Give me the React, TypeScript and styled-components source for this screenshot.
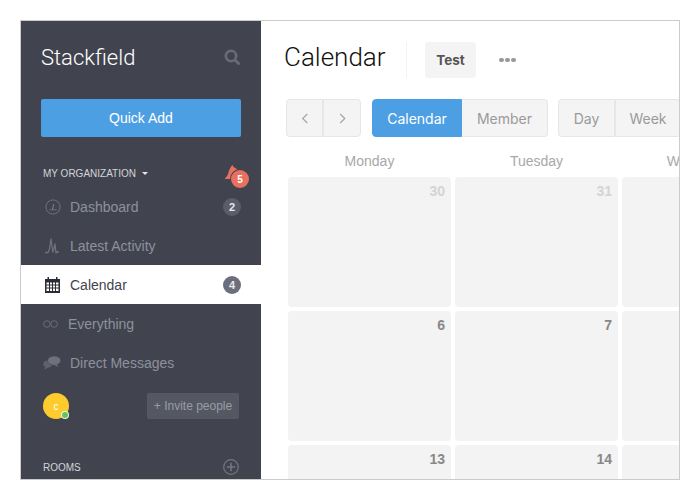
import React from "react";
import styled, { createGlobalStyle } from "styled-components";

const Global = createGlobalStyle`
  html, body { margin: 0; padding: 0; background: #fff; }
  body { font-family: "Liberation Sans", Arial, sans-serif; }
`;

const Frame = styled.div`
  box-sizing: border-box;
  width: 660px;
  height: 460px;
  margin: 20px;
  border: 1px solid #cbcbcb;
  display: flex;
  overflow: hidden;
  background: #fff;
`;

const Sidebar = styled.aside`
  width: 240px;
  flex: none;
  background: #41444f;
  display: flex;
  flex-direction: column;
`;

const Brand = styled.div`
  height: 78px;
  padding: 0 21px 0 20px;
  display: flex;
  align-items: center;
  justify-content: space-between;
  flex: none;
`;

const BrandName = styled.div`
  font-family: Roboto, sans-serif;
  font-weight: 300;
  font-size: 22px;
  color: #fff;
  padding-bottom: 6px;
`;

const SearchSlot = styled.span`
  display: flex;
  padding-bottom: 6px;
`;

const QuickAdd = styled.button`
  flex: none;
  margin-left: 20px;
  width: 200px;
  height: 38px;
  border: none;
  border-radius: 2px;
  background: #4d9fe3;
  color: #fff;
  font-family: "Liberation Sans", sans-serif;
  font-size: 14px;
  padding: 0;
`;

const SectionRow = styled.div<{ $top: number }>`
  flex: none;
  margin-top: ${(p) => p.$top}px;
  padding: 0 22px;
  height: 16px;
  display: flex;
  align-items: center;
  justify-content: space-between;
  position: relative;
`;

const SectionLabel = styled.span`
  font-size: 10px;
  color: #d3d4d8;
  display: flex;
  align-items: center;
  gap: 6px;
`;

const Caret = styled.i`
  width: 0;
  height: 0;
  border-left: 3px solid transparent;
  border-right: 3px solid transparent;
  border-top: 3px solid #e6e6e6;
`;

const BellWrap = styled.div`
  position: absolute;
  left: 204px;
  top: 0;
  width: 24px;
  height: 24px;
`;

const BellBadge = styled.span`
  position: absolute;
  left: 6px;
  top: 5px;
  width: 18px;
  height: 18px;
  border-radius: 50%;
  background: #e8705f;
  box-shadow: 0 0 0 1px #41444f;
  color: #fff;
  font-size: 10px;
  font-weight: 700;
  display: flex;
  align-items: center;
  justify-content: center;
`;

const Nav = styled.nav`
  flex: none;
  display: flex;
  flex-direction: column;
  margin-top: 6px;
`;

const NavItem = styled.div<{ $active?: boolean; $pad?: number }>`
  height: 39px;
  padding: 0 20px 0 ${(p) => p.$pad ?? 24}px;
  display: flex;
  align-items: center;
  gap: 9px;
  background: ${(p) => (p.$active ? "#fff" : "transparent")};
  color: ${(p) => (p.$active ? "#41444f" : "#8e919c")};
  font-size: 14px;
`;

const NavIcon = styled.span<{ $width?: number }>`
  width: ${(p) => p.$width ?? 16}px;
  flex: none;
  display: flex;
  align-items: center;
  justify-content: flex-start;
`;

const NavLabel = styled.span`
  flex: 1;
`;

const Count = styled.span<{ $active?: boolean }>`
  width: 18px;
  height: 18px;
  border-radius: 50%;
  background: ${(p) => (p.$active ? "#6c6f7b" : "#5b5e69")};
  color: #e9e9ec;
  font-size: 11px;
  font-weight: 700;
  display: flex;
  align-items: center;
  justify-content: center;
`;

const PeopleRow = styled.div`
  flex: none;
  margin-top: 11px;
  padding: 0 22px;
  display: flex;
  align-items: center;
  justify-content: space-between;
`;

const Avatar = styled.div`
  width: 26px;
  height: 26px;
  border-radius: 50%;
  background: #fecb2f;
  color: #fff;
  font-size: 10px;
  display: flex;
  align-items: center;
  justify-content: center;
  position: relative;
`;

const Presence = styled.span`
  position: absolute;
  right: 1px;
  bottom: 1px;
  width: 6px;
  height: 6px;
  border-radius: 50%;
  background: #62c65a;
  box-shadow: 0 0 0 1px #eef3e6;
`;

const Invite = styled.div`
  width: 92px;
  height: 26px;
  border-radius: 2px;
  background: #555863;
  color: #999ca6;
  font-size: 12px;
  display: flex;
  align-items: center;
  justify-content: center;
`;

const Main = styled.main`
  flex: 1;
  min-width: 0;
  display: flex;
  flex-direction: column;
  overflow: hidden;
`;

const Header = styled.header`
  flex: none;
  height: 78px;
  padding: 0 0 0 23px;
  display: flex;
  align-items: center;
`;

const Title = styled.h1`
  margin: 0;
  padding-bottom: 6px;
  font-family: Roboto, sans-serif;
  font-weight: 300;
  font-size: 26px;
  color: #111;
  width: 122px;
`;

const VDivider = styled.div`
  width: 1px;
  height: 36px;
  background: #f1f1f1;
`;

const Tag = styled.div`
  margin-left: 18px;
  width: 51px;
  height: 36px;
  border-radius: 3px;
  background: #f4f4f4;
  color: #555;
  font-family: Inter, sans-serif;
  font-weight: 700;
  font-size: 13.5px;
  display: flex;
  align-items: center;
  justify-content: center;
`;

const Dots = styled.div`
  margin-left: 23px;
  display: flex;
  gap: 1.5px;
`;

const Dot = styled.i`
  width: 4.5px;
  height: 4.5px;
  border-radius: 50%;
  background: #999;
`;

const Toolbar = styled.div`
  flex: none;
  height: 38px;
  padding-left: 25px;
  display: flex;
`;

const Group = styled.div<{ $left?: number }>`
  flex: none;
  display: flex;
  margin-left: ${(p) => p.$left ?? 0}px;
`;

const Seg = styled.div<{ $w: number; $on?: boolean; $sep?: boolean }>`
  box-sizing: border-box;
  width: ${(p) => p.$w}px;
  background: ${(p) => (p.$on ? "#4d9fe3" : "#f4f4f4")};
  color: ${(p) => (p.$on ? "#fff" : "#9a9a9a")};
  border: 1px solid ${(p) => (p.$on ? "#4d9fe3" : "#e6e6e6")};
  border-left-width: ${(p) => (p.$sep ? "1px" : "0")};
  font-family: Inter, sans-serif;
  font-size: 14px;
  display: flex;
  align-items: center;
  justify-content: center;

  &:first-child {
    border-left-width: 1px;
    border-radius: 4px 0 0 4px;
  }
  &:last-child {
    border-radius: 0 4px 4px 0;
  }
`;

const Days = styled.div`
  flex: none;
  padding-left: 27px;
  margin-top: 16px;
  height: 24px;
  display: grid;
  grid-template-columns: repeat(3, 163px);
  column-gap: 4px;
  width: 600px;
`;

const DayName = styled.div`
  font-size: 14px;
  color: #a8a8a8;
  text-align: center;
  line-height: 16px;
`;

const Grid = styled.div`
  flex: none;
  padding-left: 27px;
  display: grid;
  grid-template-columns: repeat(3, 163px);
  grid-auto-rows: 130px;
  gap: 4px;
  width: 600px;
`;

const Cell = styled.div<{ $muted?: boolean }>`
  border-radius: 4px;
  background: #f3f3f3;
  box-sizing: border-box;
  padding: 6px 6px 0 0;
  text-align: right;
  font-size: 14px;
  font-weight: 700;
  line-height: 16px;
  color: ${(p) => (p.$muted ? "#d4d4d4" : "#888")};
`;

const SearchIcon = () => (
  <svg width="16" height="16" viewBox="0 0 16 16" fill="none">
    <circle cx="7" cy="7" r="5.2" stroke="#696c77" strokeWidth="2.6" />
    <path d="M11 11l3.6 3.6" stroke="#696c77" strokeWidth="2.8" strokeLinecap="round" />
  </svg>
);

const BellIcon = () => (
  <svg width="16" height="16" viewBox="0 0 16 16" style={{ position: "absolute", left: 0, top: 0 }}>
    <path
      d="M0 13.2C2 11.8 3 9.5 3.8 6.5 4.4 4 5.6 2.2 7.4 0L8.6 2C11 3 13 5 15 8L12 14H0Z"
      fill="#e8705f"
    />
  </svg>
);

const GaugeIcon = () => (
  <svg width="16" height="16" viewBox="0 0 16 16" fill="none">
    <circle cx="8" cy="8" r="7.1" stroke="#70737e" strokeWidth="1" />
    <path d="M4.5 10.8h7" stroke="#70737e" strokeWidth="1" />
    <path d="M7.4 10.5L8.8 5.2" stroke="#80838e" strokeWidth="1" />
  </svg>
);

const PulseIcon = () => (
  <svg width="14" height="16" viewBox="0 0 14 16" fill="none">
    <path
      d="M0 14.5H3L4.5 11 6 1 7.8 14 8.8 11 10 6 11 15 12 14H14"
      stroke="#70737e"
      strokeWidth="1.3"
      strokeLinejoin="round"
    />
  </svg>
);

const CalendarIcon = () => (
  <svg width="15" height="16" viewBox="0 0 15 16">
    <path
      fill="#2b2d36"
      fillRule="evenodd"
      d="M2.5 0h1.5v2h7V0h1.5v2H15v14H0V2h2.5V0ZM1.5 5.5V7.5h2.5V5.5H1.5Zm3.5 0V7.5h2V5.5H5Zm3 0V7.5h2V5.5H8Zm3 0V7.5h2.5V5.5H11ZM1.5 8.5v2h2.5v-2H1.5Zm3.5 0v2h2v-2H5Zm3 0v2h2v-2H8Zm3 0v2h2.5v-2H11ZM1.5 11.5v2.5h2.5v-2.5H1.5Zm3.5 0v2.5h2v-2.5H5Zm3 0v2.5h2v-2.5H8Zm3 0v2.5h2.5v-2.5H11Z"
    />
  </svg>
);

const InfinityIcon = () => (
  <svg width="15" height="8" viewBox="0 0 15 8" fill="none">
    <circle cx="3.9" cy="4" r="3.3" stroke="#6d707b" strokeWidth="0.9" />
    <circle cx="11.1" cy="4" r="3.3" stroke="#6d707b" strokeWidth="0.9" />
  </svg>
);

const ChatIcon = () => (
  <svg width="18" height="14" viewBox="0 0 18 14">
    <ellipse cx="4.8" cy="8" rx="4.6" ry="3.6" fill="#5f626d" />
    <path d="M2 10.5L1.5 13.8 5.8 11Z" fill="#5f626d" />
    <ellipse cx="11.2" cy="4.6" rx="6.6" ry="4.6" fill="#6e717c" stroke="#41444f" strokeWidth="0.6" />
    <path d="M13.5 8L15.8 11 11 9Z" fill="#6e717c" />
  </svg>
);

const PlusCircle = () => (
  <svg width="16" height="16" viewBox="0 0 16 16" fill="none">
    <circle cx="8" cy="8" r="7.3" stroke="#747782" strokeWidth="1.2" />
    <path d="M8 3.8v8.4M3.8 8h8.4" stroke="#747782" strokeWidth="1.6" />
  </svg>
);

const Chevron = ({ dir }: { dir: "l" | "r" }) => (
  <svg width="7" height="11" viewBox="0 0 7 11" fill="none">
    <path
      d={dir === "l" ? "M6.3 1L1.7 5.5l4.6 4.5" : "M1.2 1l4.6 4.5L1.2 10"}
      stroke="#a5a5a5"
      strokeWidth="1.2"
    />
  </svg>
);

const rows = [
  [{ n: "30", m: true }, { n: "31", m: true }, { n: "" }],
  [{ n: "6" }, { n: "7" }, { n: "" }],
  [{ n: "13" }, { n: "14" }, { n: "" }],
];

export default function App() {
  return (
    <>
      <Global />
      <Frame>
        <Sidebar>
          <Brand>
            <BrandName>Stackfield</BrandName>
            <SearchSlot><SearchIcon /></SearchSlot>
          </Brand>
          <QuickAdd>Quick Add</QuickAdd>
          <SectionRow $top={28}>
            <SectionLabel>
              MY ORGANIZATION <Caret />
            </SectionLabel>
            <BellWrap>
              <BellIcon />
              <BellBadge>5</BellBadge>
            </BellWrap>
          </SectionRow>
          <Nav>
            <NavItem>
              <NavIcon><GaugeIcon /></NavIcon>
              <NavLabel>Dashboard</NavLabel>
              <Count>2</Count>
            </NavItem>
            <NavItem>
              <NavIcon><PulseIcon /></NavIcon>
              <NavLabel>Latest Activity</NavLabel>
            </NavItem>
            <NavItem $active>
              <NavIcon><CalendarIcon /></NavIcon>
              <NavLabel>Calendar</NavLabel>
              <Count $active>4</Count>
            </NavItem>
            <NavItem $pad={22}>
              <NavIcon><InfinityIcon /></NavIcon>
              <NavLabel>Everything</NavLabel>
            </NavItem>
            <NavItem $pad={22}>
              <NavIcon $width={18}><ChatIcon /></NavIcon>
              <NavLabel>Direct Messages</NavLabel>
            </NavItem>
          </Nav>
          <PeopleRow>
            <Avatar>
              c
              <Presence />
            </Avatar>
            <Invite>+ Invite people</Invite>
          </PeopleRow>
          <SectionRow $top={40}>
            <SectionLabel>ROOMS</SectionLabel>
            <PlusCircle />
          </SectionRow>
        </Sidebar>
        <Main>
          <Header>
            <Title>Calendar</Title>
            <VDivider />
            <Tag>Test</Tag>
            <Dots>
              <Dot />
              <Dot />
              <Dot />
            </Dots>
          </Header>
          <Toolbar>
            <Group>
              <Seg $w={37}><Chevron dir="l" /></Seg>
              <Seg $w={38} $sep><Chevron dir="r" /></Seg>
            </Group>
            <Group $left={11}>
              <Seg $w={90} $on>Calendar</Seg>
              <Seg $w={86}>Member</Seg>
            </Group>
            <Group $left={10}>
              <Seg $w={57}>Day</Seg>
              <Seg $w={66} $sep>Week</Seg>
            </Group>
          </Toolbar>
          <Days>
            <DayName>Monday</DayName>
            <DayName>Tuesday</DayName>
            <DayName>Wednesday</DayName>
          </Days>
          <Grid>
            {rows.flat().map((c, i) => (
              <Cell key={i} $muted={c.m}>{c.n}</Cell>
            ))}
          </Grid>
        </Main>
      </Frame>
    </>
  );
}
